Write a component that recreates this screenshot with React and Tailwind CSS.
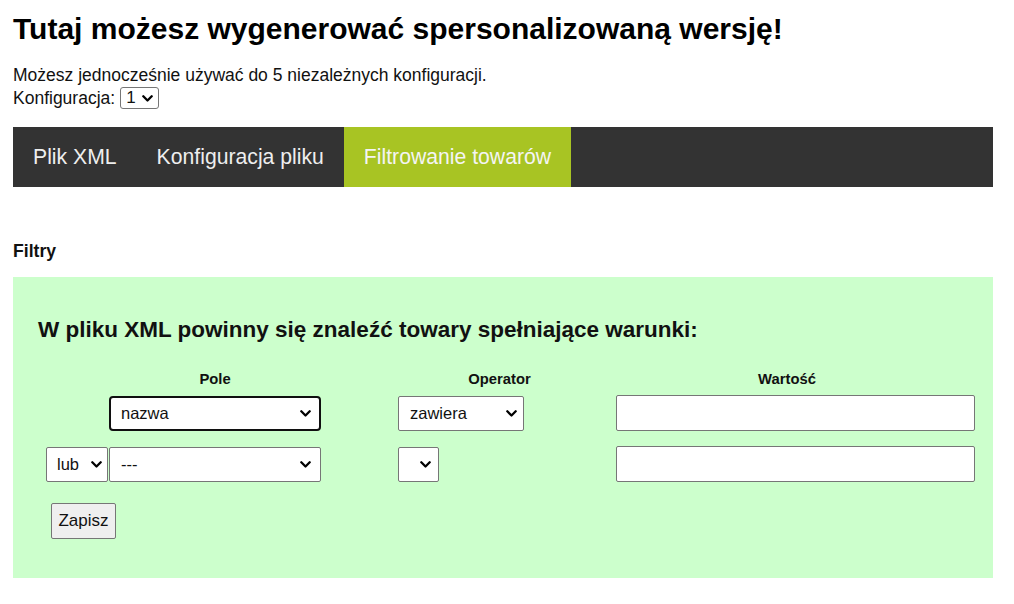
import React from "react";

const Chevron = () => (
  <svg width="11" height="7" viewBox="0 0 11 7" className="shrink-0">
    <path d="M1.3 1.3 L5.5 5.5 L9.7 1.3" fill="none" stroke="#000" strokeWidth="2.3" strokeLinecap="round" strokeLinejoin="round" />
  </svg>
);

export default function App() {
  return (
    <div className="bg-white min-h-[604px] text-[#111]" style={{ fontFamily: '"Liberation Sans", Arial, sans-serif' }}>
      <div className="ml-[13px] w-[980px]">
        <h1 className="pt-[12px] text-[30px] leading-[34px] font-bold text-black">Tutaj możesz wygenerować spersonalizowaną wersję!</h1>
        <div className="mt-[19px] text-[17.5px]">
          <div className="leading-[21px]">Możesz jednocześnie używać do 5 niezależnych konfiguracji.</div>
          <div className="flex items-center h-[22px] mt-[1px] gap-[5px]">
            <span className="leading-[21px]">Konfiguracja:</span>
            <div className="flex items-center justify-between w-[39px] h-[22px] border border-[#767676] rounded-[3px] bg-white pl-[5px] pr-[5px]">
              <span className="text-[17px] leading-[20px]">1</span>
              <Chevron />
            </div>
          </div>
        </div>

        <nav className="mt-[18px] h-[60px] bg-[#333333] flex text-[21.2px] text-[#eeeeee]">
          <div className="px-[20px] flex items-center">Plik XML</div>
          <div className="px-[20px] flex items-center">Konfiguracja pliku</div>
          <div className="px-[20px] flex items-center bg-[#a8c423] text-[#f4f4f4]">Filtrowanie towarów</div>
        </nav>

        <div className="mt-[54px] text-[17.6px] leading-[20px] font-bold">Filtry</div>

        <div className="mt-[16px] bg-[#ccffcc] h-[301px] pl-[25px] pt-[39.5px]">
          <h2 className="text-[22.5px] leading-[26px] font-bold">W pliku XML powinny się znaleźć towary spełniające warunki:</h2>
          <div className="ml-[8px] mt-[28px] text-[16.5px]">
            <div className="flex text-[14.8px] leading-[16px] font-bold">
              <div className="w-[63px]" />
              <div className="w-[212px] text-center">Pole</div>
              <div className="w-[77px]" />
              <div className="w-[203px] text-center">Operator</div>
              <div className="w-[15px]" />
              <div className="w-[342px] text-center">Wartość</div>
            </div>

            <div className="flex items-center mt-[8.5px] h-[36px]">
              <div className="w-[63px]" />
              <div className="w-[212px] h-[35px] border-2 border-[#101010] rounded-[4px] bg-white flex items-center justify-between pl-[10px] pr-[8px]">
                <span>nazwa</span>
                <Chevron />
              </div>
              <div className="w-[77px]" />
              <div className="w-[218px]">
                <div className="w-[126px] h-[35px] border border-[#767676] rounded-[2px] bg-white flex items-center justify-between pl-[11px] pr-[6px]">
                  <span>zawiera</span>
                  <Chevron />
                </div>
              </div>
              <div className="w-[359px] h-[36px] border border-[#767676] rounded-[2px] bg-white" />
            </div>

            <div className="flex items-center mt-[15px] h-[36px]">
              <div className="w-[63px]">
                <div className="w-[62px] h-[35px] border border-[#767676] rounded-[2px] bg-white flex items-center justify-between pl-[10px] pr-[5px]">
                  <span>lub</span>
                  <Chevron />
                </div>
              </div>
              <div className="w-[212px] h-[35px] border border-[#767676] rounded-[2px] bg-white flex items-center justify-between pl-[11px] pr-[9px]">
                <span>---</span>
                <Chevron />
              </div>
              <div className="w-[77px]" />
              <div className="w-[218px]">
                <div className="w-[41px] h-[35px] border border-[#767676] rounded-[2px] bg-white flex items-center justify-end pr-[7px]">
                  <Chevron />
                </div>
              </div>
              <div className="w-[359px] h-[36px] border border-[#767676] rounded-[2px] bg-white" />
            </div>

            <div className="mt-[21px] ml-[5px] w-[65px] h-[36px] border border-[#767676] rounded-[2px] bg-[#efefef] flex items-center justify-center text-[17px]">
              Zapisz
            </div>
          </div>
        </div>
      </div>
    </div>
  );
}
